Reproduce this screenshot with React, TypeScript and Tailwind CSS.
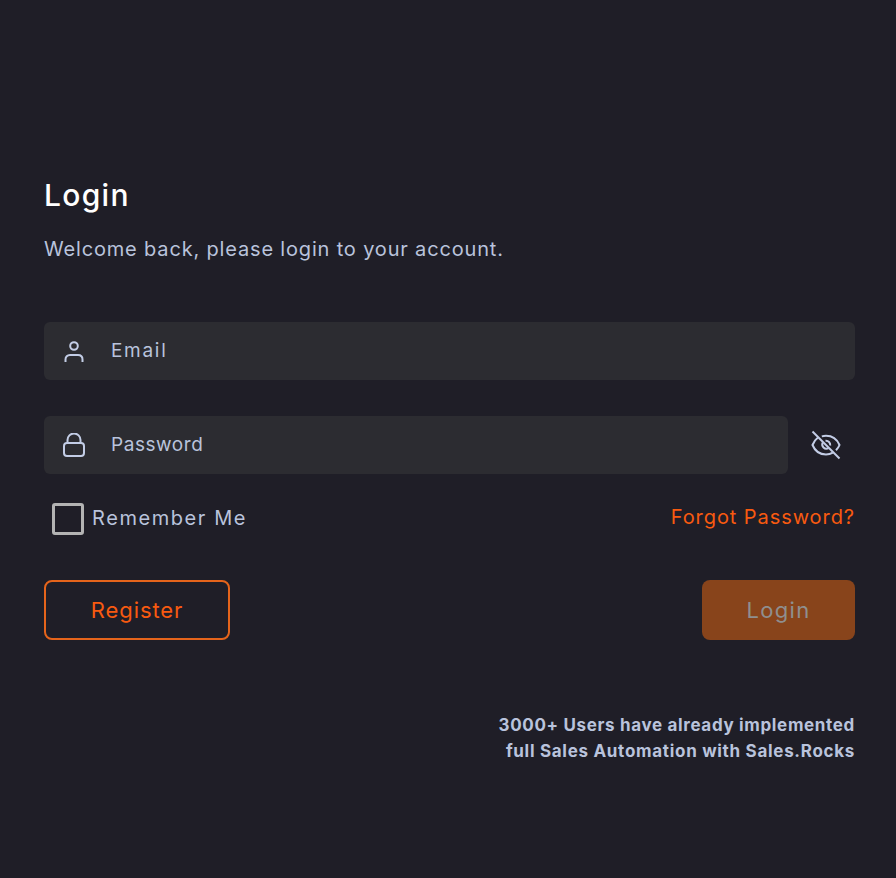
export default function App() {
  return (
    <div className="min-h-[878px] w-full bg-[#1f1e27] pt-[176px] pl-[44px] pr-[41px] font-['Inter','Liberation_Sans',sans-serif]">
      <h1 className="text-[30px] leading-[38px] font-medium text-white tracking-[1.3px]">Login</h1>
      <p className="mt-[21px] text-[20px] leading-[28px] text-[#b9c3dc] tracking-[0.83px]">Welcome back, please login to your account.</p>

      <div className="mt-[59px] h-[58px] rounded-[6px] bg-[#2c2c31] flex items-center">
        <div className="w-[67px] flex justify-center pr-[8px]">
          <svg width="20" height="21" viewBox="0 0 20 21" fill="none" stroke="#c3cde6" strokeWidth="2">
            <circle cx="10" cy="5" r="3.800" />
            <path d="M1.500 21v-2.500c0-2.700 1.800-4.500 4.500-4.500h8c2.700 0 4.500 1.800 4.500 4.500V21" />
          </svg>
        </div>
        <span className="text-[19px] text-[#b9c3dc] tracking-[1.7px]">Email</span>
      </div>

      <div className="mt-[36px] flex items-center">
        <div className="h-[58px] w-[744px] rounded-[6px] bg-[#2c2c31] flex items-center">
          <div className="w-[67px] flex justify-center pr-[8px]">
            <svg width="22" height="24" viewBox="0 0 22 24" fill="none" stroke="#c3cde6" strokeWidth="2">
              <rect x="1" y="10" width="20" height="13" rx="3" />
              <path d="M4.500 10V7a6.500 6.500 0 0 1 13 0v3" />
            </svg>
          </div>
          <span className="text-[19px] text-[#b9c3dc] tracking-[0.55px]">Password</span>
        </div>
        <div className="ml-[23px]">
          <svg width="30" height="30" viewBox="0 0 30 30" fill="none" stroke="#c3cde6" strokeWidth="2">
            <path d="M1.500 1.500l27 27" />
            <path d="M7 7.500C4.500 9.300 2.800 11.800 1.500 15c2.500 6 7.500 9.500 13.500 9.500 2.500 0 4.800-.6 6.800-1.800" />
            <path d="M10.800 6.400c1.300-.4 2.700-.6 4.200-.6 6 0 11 3.400 13.500 9.200-.8 2-2 3.800-3.500 5.300" />
            <path d="M11.800 12.500a4.200 4.200 0 0 0 5.700 5.700" />
            <path d="M14.500 10.800a4.200 4.200 0 0 1 4.700 4.700" />
          </svg>
        </div>
      </div>

      <div className="mt-[29px] flex items-center justify-between">
        <div className="flex items-center">
          <div className="ml-[8px] w-[32px] h-[32px] rounded-[3px] border-[3px] border-[#b3b3b3]" />
          <span className="ml-[8px] mb-[2px] text-[20px] leading-[24px] text-[#b9c3dc] tracking-[1.57px]">Remember Me</span>
        </div>
        <span className="mb-[4px] text-[20px] leading-[24px] text-[#f85a10] tracking-[0.93px]">Forgot Password?</span>
      </div>

      <div className="mt-[45px] flex items-center justify-between">
        <div className="w-[186px] h-[60px] rounded-[8px] border-2 border-[#e5641b] flex items-center justify-center text-[22px] text-[#f85a10] tracking-[0.9px]">Register</div>
        <div className="w-[153px] h-[60px] rounded-[8px] bg-[#88441b] flex items-center justify-center text-[22px] text-[#8f8f8f] tracking-[1.3px]">Login</div>
      </div>

      <div className="mt-[72px] text-right text-[17px] leading-[26px] font-bold text-[#b9c3dc]">
        <div className="tracking-[0.66px]">3000+ Users have already implemented</div>
        <div className="tracking-[0.7px]">full Sales Automation with Sales.Rocks</div>
      </div>
    </div>
  );
}
